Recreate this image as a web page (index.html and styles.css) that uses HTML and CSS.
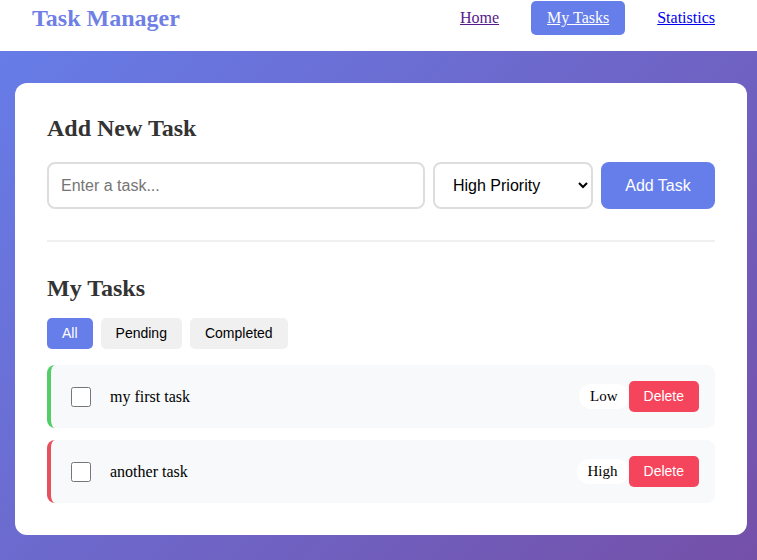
FILE: index.html
```html
<!DOCTYPE html>
<html>
<head>
<meta charset="utf-8">
<link rel="stylesheet" href="styles.css">
</head>
<body>
<header class="topbar">
  <div class="brand">Task Manager</div>
  <nav class="nav">
    <a href="#" class="nav-link visited">Home</a>
    <a href="#" class="nav-link active">My Tasks</a>
    <a href="#" class="nav-link">Statistics</a>
  </nav>
</header>
<main class="page">
  <section class="card">
    <h2 class="section-title">Add New Task</h2>
    <div class="add-row">
      <input class="task-input" type="text" placeholder="Enter a task...">
      <select class="priority">
        <option>High Priority</option>
        <option>Medium Priority</option>
        <option>Low Priority</option>
      </select>
      <button class="add-btn">Add Task</button>
    </div>
    <hr class="divider">
    <h2 class="section-title small-gap">My Tasks</h2>
    <div class="filters">
      <button class="filter active">All</button>
      <button class="filter">Pending</button>
      <button class="filter">Completed</button>
    </div>
    <ul class="tasks">
      <li class="task low">
        <input type="checkbox" class="check">
        <span class="task-text">my first task</span>
        <span class="badge">Low</span>
        <button class="delete">Delete</button>
      </li>
      <li class="task high">
        <input type="checkbox" class="check">
        <span class="task-text">another task</span>
        <span class="badge">High</span>
        <button class="delete">Delete</button>
      </li>
    </ul>
  </section>
</main>
</body>
</html>
```

FILE: styles.css
```css
html, body {
  margin: 0;
  padding: 0;
}
body {
  font-family: "Liberation Serif", "Times New Roman", serif;
  background: linear-gradient(135deg, #667eea 0%, #764ba2 100%);
  min-height: 700px;
}
.topbar {
  background: #fff;
  height: 51px;
  box-sizing: border-box;
  padding: 1px 26px 0 32px;
  display: flex;
  justify-content: space-between;
  align-items: flex-start;
}
.brand {
  font-size: 24px;
  font-weight: bold;
  color: #6f7fe6;
  line-height: 34px;
}
.nav {
  display: flex;
  gap: 16px;
}
.nav-link {
  font-size: 16px;
  line-height: 18px;
  padding: 8px 16px;
  border-radius: 5px;
  color: #0000ee;
}
.nav-link.visited {
  color: #551a8b;
}
.nav-link.active {
  background: #667eea;
  color: #fff;
}
.page {
  padding: 32px 10px 40px 15px;
}
.card {
  background: #fff;
  border-radius: 12px;
  padding: 32px;
}
.section-title {
  margin: 0 0 20px;
  font-size: 24px;
  line-height: 27px;
  color: #333;
}
.section-title.small-gap {
  margin-bottom: 16px;
}
.add-row {
  display: flex;
  gap: 8px;
  height: 47px;
}
.task-input {
  flex: 1;
  min-width: 0;
  box-sizing: border-box;
  border: 2px solid #ddd;
  border-radius: 8px;
  padding: 0 12px;
  font-family: "Liberation Sans", Arial, sans-serif;
  font-size: 16px;
  outline: none;
}
.task-input::placeholder {
  color: #757575;
}
.priority {
  width: 160px;
  box-sizing: border-box;
  border: 2px solid #ddd;
  border-radius: 8px;
  padding: 0 14px;
  font-family: "Liberation Sans", Arial, sans-serif;
  font-size: 16px;
  background: #fff;
  color: #000;
}
.add-btn {
  width: 114px;
  border: none;
  border-radius: 8px;
  background: #667eea;
  color: #fff;
  font-family: "Liberation Sans", Arial, sans-serif;
  font-size: 16px;
}
.divider {
  border: none;
  border-top: 2px solid #f0f0f0;
  margin: 31px 0 33px;
}
.filters {
  display: flex;
  gap: 8px;
  margin-bottom: 16px;
}
.filter {
  border: none;
  border-radius: 5px;
  background: #f0f0f0;
  color: #000;
  font-family: "Liberation Sans", Arial, sans-serif;
  font-size: 14px;
  line-height: 17px;
  padding: 7px 15px;
}
.filter.active {
  background: #667eea;
  color: #fff;
}
.tasks {
  list-style: none;
  margin: 0;
  padding: 0;
  display: flex;
  flex-direction: column;
  gap: 12px;
}
.task {
  display: flex;
  align-items: center;
  background: #f8f9fa;
  border-radius: 8px;
  border-left: 4px solid #51cf66;
  padding: 16px 16px 16px 20px;
}
.task.high {
  border-left-color: #e5515d;
}
.check {
  width: 20px;
  height: 20px;
  margin: 0 19px 0 0;
}
.task-text {
  flex: 1;
  font-size: 16px;
  color: #000;
}
.badge {
  background: #fff;
  border-radius: 12px;
  padding: 4px 11px;
  font-size: 15px;
  line-height: 17px;
  color: #000;
}
.delete {
  border: none;
  border-radius: 5px;
  background: #f5455c;
  color: #fff;
  font-family: "Liberation Sans", Arial, sans-serif;
  font-size: 14px;
  line-height: 17px;
  padding: 7px 15px;
}
```
